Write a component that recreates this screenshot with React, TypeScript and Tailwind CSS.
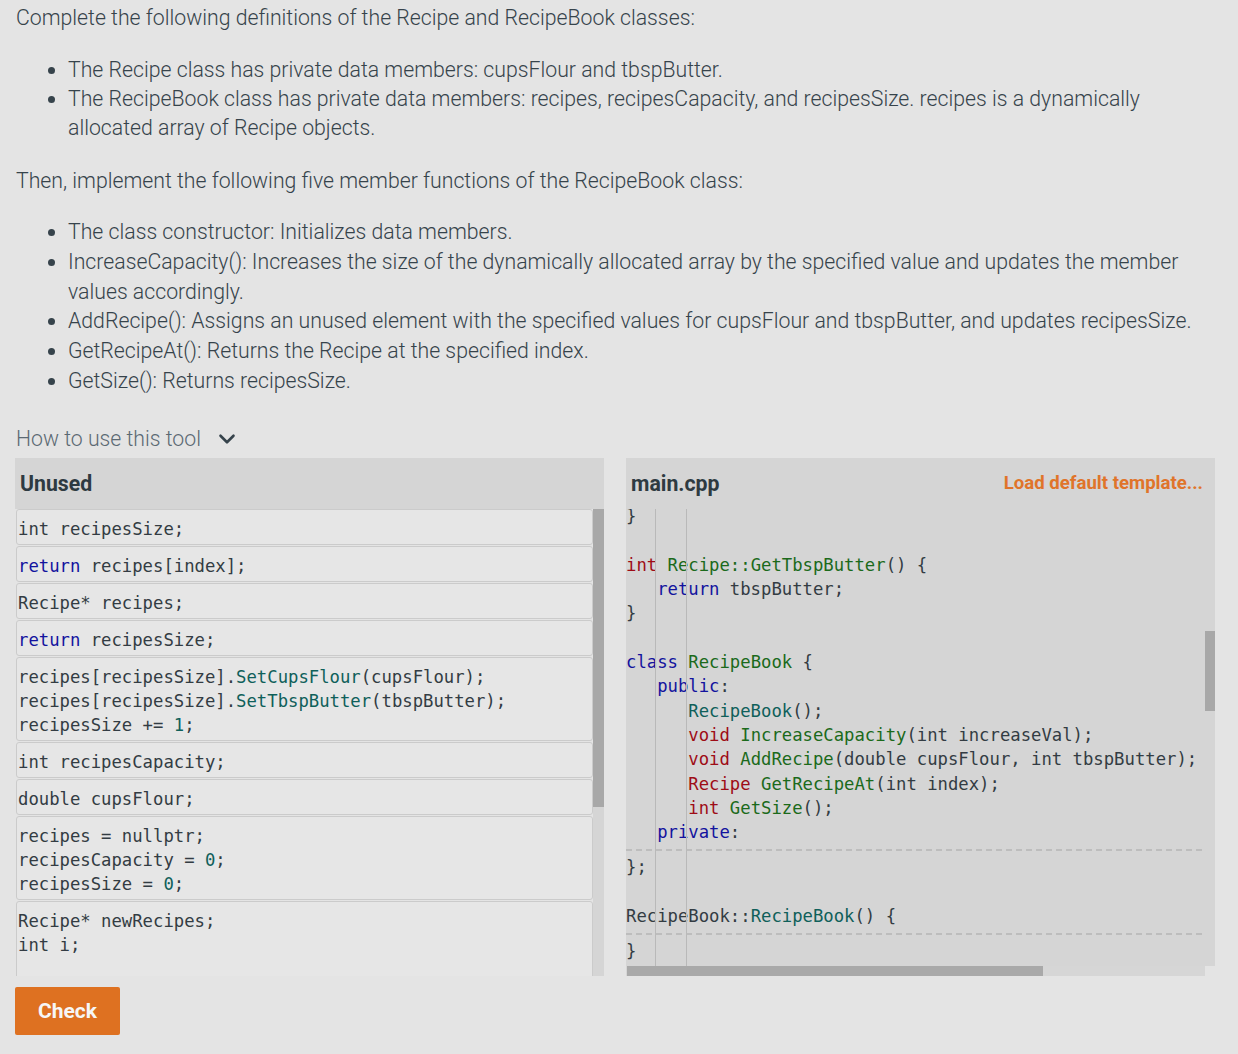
import { ChevronDown } from "lucide-react";

type Tok = [string, string?];

const KW = "text-[#13139e]";
const TY = "text-[#9e0c16]";
const DEF = "text-[#1b6a1b]";
const CALL = "text-[#0f605a]";

const unused: Tok[][][] = [
  [[["int recipesSize;"]]],
  [[["return", KW], [" recipes[index];"]]],
  [[["Recipe* recipes;"]]],
  [[["return", KW], [" recipesSize;"]]],
  [
    [["recipes[recipesSize]."], ["SetCupsFlour", CALL], ["(cupsFlour);"]],
    [["recipes[recipesSize]."], ["SetTbspButter", CALL], ["(tbspButter);"]],
    [["recipesSize += "], ["1", CALL], [";"]],
  ],
  [[["int recipesCapacity;"]]],
  [[["double cupsFlour;"]]],
  [
    [["recipes = nullptr;"]],
    [["recipesCapacity = "], ["0", CALL], [";"]],
    [["recipesSize = "], ["0", CALL], [";"]],
  ],
  [[["Recipe* newRecipes;"]], [["int i;"]], [[" "]]],
];

// "edit" marks a dashed editable-region separator
const code: (Tok[] | "edit")[] = [
  [["}"]],
  [[" "]],
  [["int", TY], [" "], ["Recipe::GetTbspButter", DEF], ["() {"]],
  [["   "], ["return", KW], [" tbspButter;"]],
  [["}"]],
  [[" "]],
  [["class", KW], [" "], ["RecipeBook", DEF], [" {"]],
  [["   "], ["public", KW], [":"]],
  [["      "], ["RecipeBook", CALL], ["();"]],
  [["      "], ["void", TY], [" "], ["IncreaseCapacity", DEF], ["(int increaseVal);"]],
  [["      "], ["void", TY], [" "], ["AddRecipe", DEF], ["(double cupsFlour, int tbspButter);"]],
  [["      "], ["Recipe", TY], [" "], ["GetRecipeAt", DEF], ["(int index);"]],
  [["      "], ["int", TY], [" "], ["GetSize", DEF], ["();"]],
  [["   "], ["private", KW], [":"]],
  "edit",
  [["};"]],
  [[" "]],
  [["RecipeBook::"], ["RecipeBook", CALL], ["() {"]],
  "edit",
  [["}"]],
];

const Line = ({ toks }: { toks: Tok[] }) => (
  <div className="whitespace-pre">
    {toks.map(([t, c], i) => (
      <span key={i} className={c}>
        {t}
      </span>
    ))}
  </div>
);

const App = () => {
  return (
    <div className="min-h-screen bg-[#e4e4e4] px-[15px] pt-[3px] text-[#36434b] font-['Roboto',sans-serif]">
      <div className="ml-[1px] w-[1200px] text-[21.25px] font-light leading-[29.5px]">
        <p>Complete the following definitions of the Recipe and RecipeBook classes:</p>
        <ul className="mt-[22px] list-disc pl-[52px] leading-[29px]">
          <li>The Recipe class has private data members: cupsFlour and tbspButter.</li>
          <li>
            The RecipeBook class has private data members: recipes, recipesCapacity, and recipesSize. recipes is a
            dynamically allocated array of Recipe objects.
          </li>
        </ul>
        <p className="mt-[24px]">Then, implement the following five member functions of the RecipeBook class:</p>
        <ul className="mt-[22px] list-disc pl-[52px] leading-[29.8px]">
          <li>The class constructor: Initializes data members.</li>
          <li>
            IncreaseCapacity(): Increases the size of the dynamically allocated array by the specified value and updates
            the member values accordingly.
          </li>
          <li>
            AddRecipe(): Assigns an unused element with the specified values for cupsFlour and tbspButter, and updates
            recipesSize.
          </li>
          <li>GetRecipeAt(): Returns the Recipe at the specified index.</li>
          <li>GetSize(): Returns recipesSize.</li>
        </ul>
        <div className="mt-[28px] flex items-center text-[#5b6973]">
          <span>How to use this tool</span>
          <ChevronDown size={26} strokeWidth={2.4} className="ml-[13px] text-[#36434b]" />
        </div>
      </div>

      <div className="mt-[5px] grid w-[1200px] grid-cols-2 gap-[22px]">
        {/* left: unused blocks */}
        <div className="flex h-[518px] flex-col">
          <div className="flex h-[51px] items-center bg-[#d5d5d5] px-[5px] text-[21.25px] font-bold text-[#2e3a41]">
            Unused
          </div>
          <div className="flex flex-1 overflow-hidden">
            <div className="flex-1 overflow-hidden pl-[1px] font-['DejaVu_Sans_Mono',monospace] text-[17.25px] leading-[24px] text-[#333c43]">
              {unused.map((block, i) => (
                <div
                  key={i}
                  className="mb-[1px] rounded-[3px] border border-[#cbcbcb] bg-[#e6e6e6] pt-[7px] pb-[3px] pl-[1px]"
                >
                  {block.map((l, j) => (
                    <Line key={j} toks={l} />
                  ))}
                </div>
              ))}
            </div>
            <div className="w-[11px] bg-[#d5d5d5]">
              <div className="h-[298px] bg-[#a8a8a8]" />
            </div>
          </div>
        </div>

        {/* right: main.cpp editor */}
        <div className="flex h-[518px] flex-col">
          <div className="flex h-[51px] items-center justify-between bg-[#d5d5d5] pl-[5px] pr-[12px]">
            <span className="text-[21.25px] font-bold text-[#2e3a41]">main.cpp</span>
            <span className="text-[18.6px] font-bold text-[#e0742a]">Load default template...</span>
          </div>
          <div className="flex h-[457px] bg-[#d5d5d5]">
            <div className="relative flex-1 overflow-hidden font-['DejaVu_Sans_Mono',monospace] text-[17.25px] leading-[24.3px] text-[#333c43]">
              <div className="absolute left-[29px] top-0 h-full w-px bg-[#b9b9b9]" />
              <div className="absolute left-[60px] top-0 h-full w-px bg-[#b9b9b9]" />
              <div className="-mt-[5px]">
                {code.map((l, i) =>
                  l === "edit" ? (
                    <div key={i} className="pt-[5px] pb-[4px]">
                      <div className="h-[2px] bg-[repeating-linear-gradient(90deg,#bdbdbd_0_6px,transparent_6px_10px)]" />
                    </div>
                  ) : (
                    <Line key={i} toks={l} />
                  )
                )}
              </div>
            </div>
            <div className="w-[10px]">
              <div className="mt-[122px] h-[80px] bg-[#a8a8a8]" />
            </div>
          </div>
          <div className="flex h-[10px]">
            <div className="w-[579px] bg-[#d6d6d6] pl-[1px]">
              <div className="h-full w-[416px] bg-[#a9a9a9]" />
            </div>
          </div>
        </div>
      </div>

      <button className="mt-[11px] flex h-[48px] w-[105px] items-center justify-center rounded-[2px] bg-[#de7121] text-[21px] font-bold text-[#f6f6f6]">
        Check
      </button>
    </div>
  );
};

export default App;
